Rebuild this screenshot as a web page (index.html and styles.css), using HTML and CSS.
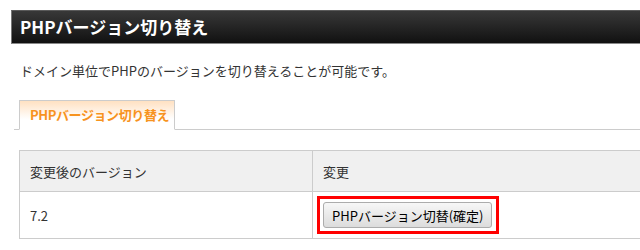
FILE: index.html
```html
<!DOCTYPE html>
<html lang="ja">
<head>
  <meta charset="UTF-8">
  <meta name="viewport" content="width=device-width, initial-scale=1.0">
  <title>PHPバージョン切り替え</title>
  <link rel="stylesheet" href="styles.css">
</head>
<body>

  <div class="page">
    <h1 class="title">PHPバージョン切り替え</h1>

    <p class="lead">ドメイン単位でPHPのバージョンを切り替えることが可能です。</p>

    <ul class="tabs">
      <li class="tab active">PHPバージョン切り替え</li>
    </ul>

    <table class="version-table">
      <tr>
        <th class="col-version">変更後のバージョン</th>
        <th>変更</th>
      </tr>
      <tr>
        <td class="col-version">7.2</td>
        <td class="cell-action">
          <span class="highlight"><button type="button" class="btn">PHPバージョン切替(確定)</button></span>
        </td>
      </tr>
    </table>
  </div>

</body>
</html>
```

FILE: styles.css
```css
html, body {
  overflow: hidden;
}

body {
  margin: 0;
  background-color: #fff;
  color: #333;
  font-family: "Noto Sans CJK JP", "Noto Sans", sans-serif;
  font-size: 13px;
}

.page {
  width: 700px;
  padding: 10px 0 0 11px;
}

.title {
  margin: 0;
  height: 32px;
  padding-left: 8px;
  line-height: 32px;
  font-size: 17px;
  font-weight: bold;
  color: #fff;
  background: linear-gradient(#383838, #111);
  border: 1px solid #777;
  border-top-color: #5a5a5a;
  border-bottom-color: #888;
}

.lead {
  margin: 17px 0 0 9px;
  line-height: 19px;
}

.tabs {
  list-style: none;
  margin: 20px 0 0 3px;
  padding: 0 0 0 5px;
  border-bottom: 1px solid #ccc;
  display: flex;
}

.tab {
  height: 28px;
  line-height: 28px;
  padding: 0 5px 0 10px;
  margin-bottom: -1px;
  font-weight: bold;
  letter-spacing: -0.4px;
  color: #f7931e;
  border: 1px solid #ccc;
  border-bottom: 1px solid #fff;
  background: linear-gradient(#ffe1c2, #fff 65%);
}

.version-table {
  margin: 20px 0 0 8px;
  width: 680px;
  border-collapse: collapse;
}

.version-table th,
.version-table td {
  border: 1px solid #ccc;
  text-align: left;
  line-height: 19px;
}

.version-table th {
  height: 40px;
  padding: 0 10px;
  font-weight: normal;
  background-color: #f0f0f0;
}

.version-table td {
  height: 46px;
  padding: 0 10px;
}

.col-version {
  width: 272px;
}

.version-table td.cell-action {
  padding: 0 4px;
}

.highlight {
  display: inline-block;
  border: 3px solid #f00;
  padding: 3px 4px 3px 3px;
  vertical-align: middle;
}

.btn {
  display: block;
  height: 26px;
  padding: 0 8px;
  font-family: inherit;
  font-size: 13px;
  color: #000;
  background: linear-gradient(#f7f7f7, #dcdcdc);
  border: 1px solid #acacac;
  border-radius: 3px;
  cursor: pointer;
}
```
